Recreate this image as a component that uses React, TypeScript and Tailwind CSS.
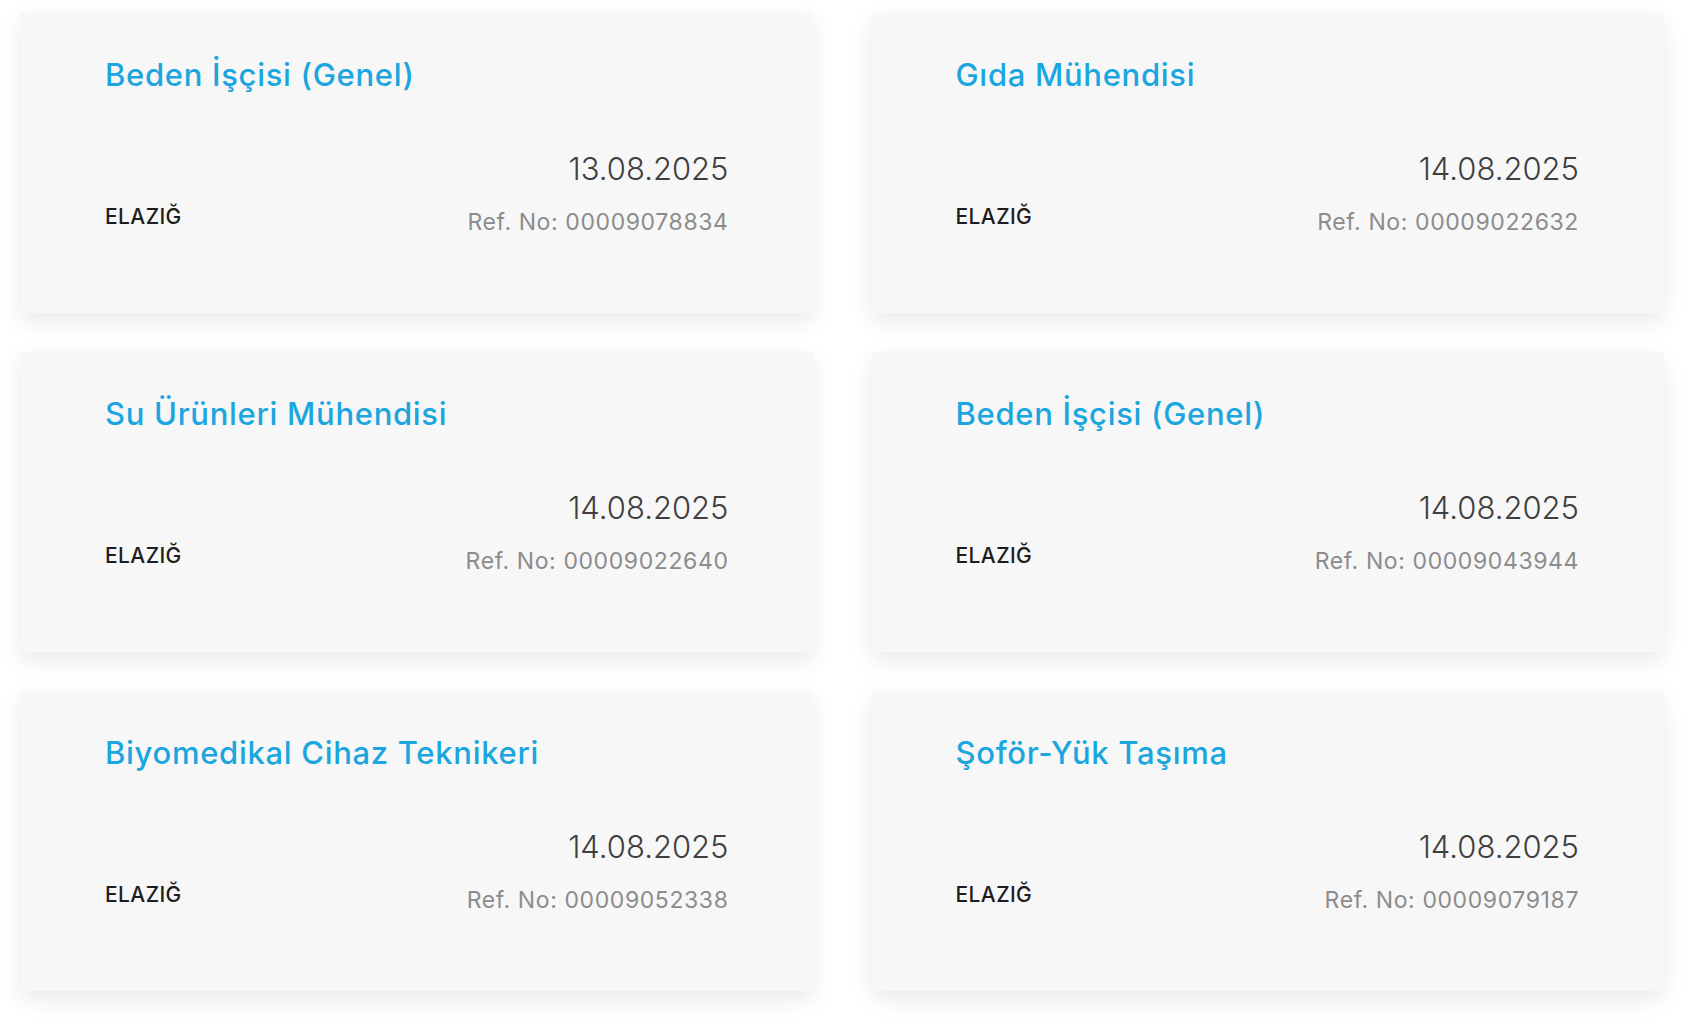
const jobs = [
  { title: 'Beden İşçisi (Genel)', date: '13.08.2025', ref: '00009078834' },
  { title: 'Gıda Mühendisi', date: '14.08.2025', ref: '00009022632' },
  { title: 'Su Ürünleri Mühendisi', date: '14.08.2025', ref: '00009022640' },
  { title: 'Beden İşçisi (Genel)', date: '14.08.2025', ref: '00009043944' },
  { title: 'Biyomedikal Cihaz Teknikeri', date: '14.08.2025', ref: '00009052338' },
  { title: 'Şoför-Yük Taşıma', date: '14.08.2025', ref: '00009079187' },
]

const cardBase = 'h-[300px] bg-[#f7f7f7] shadow-[0_8px_22px_rgba(0,0,0,0.09)]'

function JobCard({ title, date, ref }: { title: string; date: string; ref: string }) {
  return (
    <div className={cardBase + ' px-[84px] pt-[42px]'}>
      <h3 className="text-[31px] leading-[40px] font-medium text-[#1ba6df] tracking-[0.7px]">{title}</h3>
      <div className="mt-[54px] flex items-end justify-between">
        <span className="mb-[7px] text-[21px] leading-[24px] font-medium tracking-[0.4px] text-[#1d1d1d]">ELAZIĞ</span>
        <div className="text-right">
          <div className="text-[31px] leading-[40px] font-light text-[#3f3f3f]">{date}</div>
          <div className="mt-[19px] text-[23px] leading-[28px] tracking-[0.6px] text-[#8c8c8c]">Ref. No: {ref}</div>
        </div>
      </div>
    </div>
  )
}

export default function App() {
  return (
    <div className="min-h-screen bg-white overflow-hidden" style={{ fontFamily: 'Inter, "Open Sans", sans-serif' }}>
      <div className="mt-[-326px] pl-[21px] pr-[19px] pb-[40px] grid grid-cols-2 gap-x-[59px] gap-y-[39px]">
        {/* previous row, scrolled out of view: only its shadow shows at the top */}
        <div className={cardBase} />
        <div className={cardBase} />
        {jobs.map((j, i) => (
          <JobCard key={i} {...j} />
        ))}
      </div>
    </div>
  )
}
